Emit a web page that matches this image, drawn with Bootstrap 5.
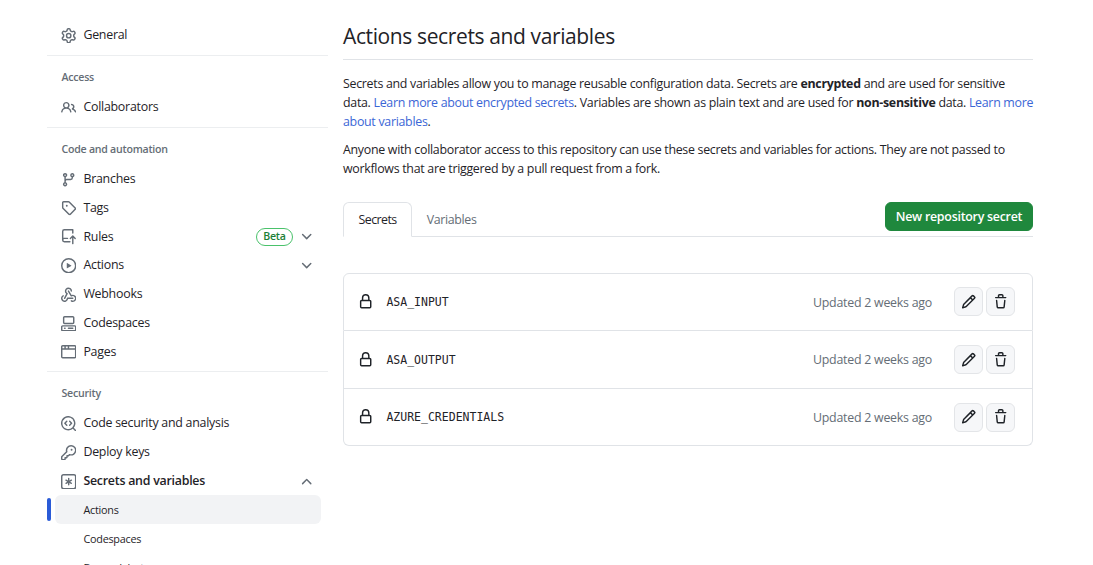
<!DOCTYPE html>
<html lang="en">
<head>
    <meta charset="UTF-8">
    <meta name="viewport" content="width=device-width, initial-scale=1.0">
    <title>Actions secrets and variables</title>
    <link href="https://cdn.jsdelivr.net/npm/bootstrap@5.3.0/dist/css/bootstrap.min.css" rel="stylesheet">
    <style>
        html, body { height: 565px; overflow: hidden; }
        body {
            font-family: "Open Sans", "Liberation Sans", sans-serif;
            font-size: 12.4px;
            letter-spacing: -0.25px;
            color: #1f2328;
            background: #fff;
        }
        .page-wrap { padding-left: 47px; width: 1033px; }
        .side-col { width: 281px; flex: none; padding-top: 20.5px; }
        .main-col { width: 690px; flex: none; margin-left: 15px; padding-top: 21px; }

        .side-item {
            height: 28.8px;
            padding-top: 0.6px;
            padding-left: 6px;
            padding-right: 7px;
            margin-right: 7px;
            margin-left: 8px;
            color: #1f2328;
            text-decoration: none;
            border-radius: 6px;
            gap: 7px;
        }
        .side-item svg.lead-ico { width: 15.4px; height: 15.4px; fill: #656d76; flex: none; }
        .side-item svg.chev { width: 15.4px; height: 15.4px; fill: #656d76; flex: none; }
        .side-sub { font-size: 10.8px; padding-left: 28.5px; }
        .side-sub.is-current { background: #f2f3f5; }
        .cur-bar {
            position: absolute;
            left: -8px;
            top: 3px;
            width: 4px;
            height: 22.5px;
            background: #2a5bd7;
            border-radius: 4px;
        }
        .side-head {
            font-size: 10.6px;
            font-weight: 600;
            color: #656d76;
            padding: 13.9px 0 7.9px 14.5px;
            line-height: 15px;
        }
        .side-rule { border-top: 1px solid #eceef0; margin-top: 5px; }
        .side-rule.rule-first { margin-top: 6px; }

        .page-title {
            font-size: 21px;
            letter-spacing: -0.38px;
            font-weight: 400;
            line-height: 30px;
            padding-bottom: 8px;
            margin-bottom: 13.5px;
            border-bottom: 1px solid #e0e3e7;
        }
        .intro { line-height: 19.2px; margin-bottom: 9px; margin-right: -3px; letter-spacing: -0.29px; }
        .intro a { color: #3b66d6; text-decoration: none; }
        .intro b { font-weight: 700; }

        .tab-row { margin-top: 23px; border-bottom: 1px solid #e0e3e7; height: 35.5px; }
        .tab-link {
            color: #656d76;
            text-decoration: none;
            height: 35.5px;
            padding: 2px 14.5px 0;
            margin-bottom: -1px;
            letter-spacing: -0.35px;
        }
        .tab-link.is-on {
            color: #1f2328;
            background: #fff;
            border: 1px solid #e0e3e7;
            border-bottom-color: #fff;
            border-radius: 6px 6px 0 0;
            letter-spacing: -0.55px;
        }
        .btn-new {
            --bs-btn-bg: #1f883d;
            --bs-btn-border-color: #1f883d;
            --bs-btn-color: #fff;
            --bs-btn-hover-bg: #1f883d;
            --bs-btn-hover-color: #fff;
            font-size: 12.4px;
            font-weight: 600;
            letter-spacing: -0.25px;
            width: 148px;
            height: 29px;
            padding: 1px 0 0;
            margin-bottom: 5px;
            border-radius: 6px;
        }
        .secret-box {
            margin-top: 36px;
            --bs-list-group-border-color: #e0e3e7;
            --bs-list-group-border-radius: 6px;
            --bs-list-group-color: #1f2328;
            --bs-list-group-item-padding-x: 14px;
            --bs-list-group-item-padding-y: 0;
        }
        .secret-box .list-group-item { height: 57.8px; padding-right: 17px; }
        .lock-ico { width: 15.4px; height: 15.4px; fill: #1f2328; flex: none; margin-right: 13px; }
        .secret-name { font-family: "DejaVu Sans Mono", "Liberation Mono", monospace; font-size: 11.5px; letter-spacing: 0; padding-top: 2px; }
        .secret-age { color: #656d76; margin-left: auto; margin-right: 22px; padding-top: 2px; }
        .ico-group { gap: 3px; }
        .ico-btn {
            --bs-btn-padding-x: 0;
            --bs-btn-padding-y: 0;
            --bs-btn-bg: #f6f7f9;
            --bs-btn-border-color: #e3e5e8;
            width: 29px;
            height: 29px;
            border-radius: 6px;
        }
        .ico-btn svg { width: 15.4px; height: 15.4px; fill: #1f2328; }
        .beta-tag {
            font-size: 10.6px;
            font-weight: 600;
            color: #1a7f37;
            border: 1px solid #4ac26b;
            border-radius: 10px;
            line-height: 15.5px;
            padding: 0 6px;
            margin-left: auto;
            margin-right: -1px;
        }
        .mr-end { margin-left: auto; }
    </style>
</head>
<body>
    <svg width="0" height="0" class="d-block position-absolute">
        <defs>
            <symbol id="i-gear" viewBox="0 0 16 16"><path d="M8 0a8.2 8.2 0 0 1 .701.031C9.444.095 9.99.645 10.16 1.29l.288 1.107c.018.066.079.158.212.224.231.114.454.243.668.386.123.082.233.09.299.071l1.103-.303c.644-.176 1.392.021 1.82.63.27.385.506.792.704 1.218.315.675.111 1.422-.364 1.891l-.814.806c-.049.048-.098.147-.088.294.016.257.016.515 0 .772-.01.147.038.246.088.294l.814.806c.475.469.679 1.216.364 1.891a7.977 7.977 0 0 1-.704 1.217c-.428.61-1.176.807-1.82.63l-1.102-.302c-.067-.019-.177-.011-.3.071a5.909 5.909 0 0 1-.668.386c-.133.066-.194.158-.211.224l-.29 1.106c-.168.646-.715 1.196-1.458 1.26a8.006 8.006 0 0 1-1.402 0c-.743-.064-1.289-.614-1.458-1.26l-.289-1.106c-.018-.066-.079-.158-.212-.224a5.738 5.738 0 0 1-.668-.386c-.123-.082-.233-.09-.299-.071l-1.103.303c-.644.176-1.392-.021-1.82-.63a8.12 8.12 0 0 1-.704-1.218c-.315-.675-.111-1.422.363-1.891l.815-.806c.05-.048.098-.147.088-.294a6.214 6.214 0 0 1 0-.772c.01-.147-.038-.246-.088-.294l-.815-.806C.635 6.045.431 5.298.746 4.623a7.92 7.92 0 0 1 .704-1.217c.428-.61 1.176-.807 1.82-.63l1.102.302c.067.019.177.011.3-.071.214-.143.437-.272.668-.386.133-.066.194-.158.211-.224l.29-1.106C6.009.645 6.556.095 7.299.03 7.53.01 7.764 0 8 0Zm-.571 1.525c-.036.003-.108.036-.137.146l-.289 1.105c-.147.561-.549.967-.998 1.189-.173.086-.34.183-.5.29-.417.278-.97.423-1.529.27l-1.103-.303c-.109-.03-.175.016-.195.045-.22.312-.412.644-.573.99-.014.031-.021.11.059.19l.815.806c.411.406.562.957.53 1.456a4.709 4.709 0 0 0 0 .582c.032.499-.119 1.05-.53 1.456l-.815.806c-.081.08-.073.159-.059.19.162.346.353.677.573.989.02.03.085.076.195.046l1.102-.303c.56-.153 1.113-.008 1.53.27.161.107.328.204.501.29.447.222.85.629.997 1.189l.289 1.105c.029.109.101.143.137.146a6.6 6.6 0 0 0 1.142 0c.036-.003.108-.036.137-.146l.289-1.105c.147-.561.549-.967.998-1.189.173-.086.34-.183.5-.29.417-.278.97-.423 1.529-.27l1.103.303c.109.029.175-.016.195-.045.22-.313.411-.644.573-.99.014-.031.021-.11-.059-.19l-.815-.806c-.411-.406-.562-.957-.53-1.456a4.709 4.709 0 0 0 0-.582c-.032-.499.119-1.05.53-1.456l.815-.806c.081-.08.073-.159.059-.19a6.464 6.464 0 0 0-.573-.989c-.02-.03-.085-.076-.195-.046l-1.102.303c-.56.153-1.113.008-1.53-.27a4.44 4.44 0 0 0-.501-.29c-.447-.222-.85-.629-.997-1.189l-.289-1.105c-.029-.11-.101-.143-.137-.146a6.6 6.6 0 0 0-1.142 0ZM11 8a3 3 0 1 1-6 0 3 3 0 0 1 6 0ZM9.5 8a1.5 1.5 0 1 0-3.001.001A1.5 1.5 0 0 0 9.5 8Z"/></symbol>
            <symbol id="i-people" viewBox="0 0 16 16"><path d="M2 5.5a3.5 3.5 0 1 1 5.898 2.549 5.508 5.508 0 0 1 3.034 4.084.75.75 0 1 1-1.482.235 4 4 0 0 0-7.9 0 .75.75 0 0 1-1.482-.236A5.507 5.507 0 0 1 3.102 8.05 3.493 3.493 0 0 1 2 5.5ZM11 4a3.001 3.001 0 0 1 2.22 5.018 5.01 5.01 0 0 1 2.56 3.012.749.749 0 0 1-.885.954.752.752 0 0 1-.549-.514 3.507 3.507 0 0 0-2.522-2.372.75.75 0 0 1-.574-.73v-.352a.75.75 0 0 1 .416-.672A1.5 1.5 0 0 0 11 5.5.75.75 0 0 1 11 4Zm-5.5-.5a2 2 0 1 0-.001 3.999A2 2 0 0 0 5.5 3.5Z"/></symbol>
            <symbol id="i-branch" viewBox="0 0 16 16"><path d="M9.5 3.25a2.25 2.25 0 1 1 3 2.122V6A2.5 2.5 0 0 1 10 8.5H6a1 1 0 0 0-1 1v1.128a2.251 2.251 0 1 1-1.5 0V5.372a2.25 2.25 0 1 1 1.5 0v1.836A2.493 2.493 0 0 1 6 7h4a1 1 0 0 0 1-1v-.628A2.25 2.25 0 0 1 9.5 3.25Zm-6 0a.75.75 0 1 0 1.5 0 .75.75 0 0 0-1.5 0Zm8.25-.75a.75.75 0 1 0 0 1.5.75.75 0 0 0 0-1.5ZM4.25 12a.75.75 0 1 0 0 1.5.75.75 0 0 0 0-1.5Z"/></symbol>
            <symbol id="i-tag" viewBox="0 0 16 16"><path d="M1 7.775V2.75C1 1.784 1.784 1 2.75 1h5.025c.464 0 .91.184 1.238.513l6.25 6.25a1.75 1.75 0 0 1 0 2.474l-5.026 5.026a1.75 1.75 0 0 1-2.474 0l-6.25-6.25A1.752 1.752 0 0 1 1 7.775Zm1.5 0c0 .066.026.13.073.177l6.25 6.25a.25.25 0 0 0 .354 0l5.025-5.025a.25.25 0 0 0 0-.354l-6.25-6.25a.25.25 0 0 0-.177-.073H2.75a.25.25 0 0 0-.25.25ZM6 5a1 1 0 1 1 0 2 1 1 0 0 1 0-2Z"/></symbol>
            <symbol id="i-push" viewBox="0 0 16 16"><path d="M1 2.5A2.5 2.5 0 0 1 3.5 0h8.75a.75.75 0 0 1 .75.75v3.5a.75.75 0 0 1-1.5 0V1.5h-8a1 1 0 0 0-1 1v6.708A2.493 2.493 0 0 1 3.5 9h3.25a.75.75 0 0 1 0 1.5H3.5a1 1 0 0 0 0 2h5.75a.75.75 0 0 1 0 1.5H3.5A2.5 2.5 0 0 1 1 11.5Zm13.23 7.79h-.001l-1.224-1.224v6.184a.75.75 0 0 1-1.5 0V9.066L10.28 10.29a.75.75 0 0 1-1.06-1.061l2.505-2.504a.75.75 0 0 1 1.06 0L15.29 9.23a.751.751 0 0 1-.018 1.042.751.751 0 0 1-1.042.018Z"/></symbol>
            <symbol id="i-play" viewBox="0 0 16 16"><path d="M8 0a8 8 0 1 1 0 16A8 8 0 0 1 8 0ZM1.5 8a6.5 6.5 0 1 0 13 0 6.5 6.5 0 0 0-13 0Zm4.879-2.773 4.264 2.559a.25.25 0 0 1 0 .428l-4.264 2.559A.25.25 0 0 1 6 10.559V5.442a.25.25 0 0 1 .379-.215Z"/></symbol>
            <symbol id="i-webhook" viewBox="0 0 16 16"><path d="M5.5 4.25a2.25 2.25 0 0 1 4.5 0 .75.75 0 0 0 1.5 0 3.75 3.75 0 1 0-6.14 2.889l-2.272 4.258a.75.75 0 0 0 1.324.706L7 7.25a.75.75 0 0 0-.309-1.015A2.25 2.25 0 0 1 5.5 4.25Z"/><path d="M7.364 3.607a.75.75 0 0 1 1.03.257l2.608 4.349a3.75 3.75 0 1 1-.628 6.785.75.75 0 0 1 .752-1.299 2.25 2.25 0 1 0-.033-3.88.75.75 0 0 1-1.03-.256L7.107 4.636a.75.75 0 0 1 .257-1.03Z"/><path d="M2.9 8.776A.75.75 0 0 1 2.625 9.8 2.25 2.25 0 1 0 6 11.75a.75.75 0 0 1 .75-.751h5.5a.75.75 0 0 1 0 1.5H7.425a3.751 3.751 0 1 1-5.55-3.998.75.75 0 0 1 1.024.274Z"/></symbol>
            <symbol id="i-codespaces" viewBox="0 0 16 16"><path d="M0 11.25c0-.966.784-1.75 1.75-1.75h12.5c.966 0 1.75.784 1.75 1.75v3A1.75 1.75 0 0 1 14.25 16H1.75A1.75 1.75 0 0 1 0 14.25Zm2-9.5C2 .784 2.784 0 3.75 0h8.5C13.216 0 14 .784 14 1.75v5a1.75 1.75 0 0 1-1.75 1.75h-8.5A1.75 1.75 0 0 1 2 6.75Zm1.75-.25a.25.25 0 0 0-.25.25v5c0 .138.112.25.25.25h8.5a.25.25 0 0 0 .25-.25v-5a.25.25 0 0 0-.25-.25Zm-2 9.5a.25.25 0 0 0-.25.25v3c0 .138.112.25.25.25h12.5a.25.25 0 0 0 .25-.25v-3a.25.25 0 0 0-.25-.25Z"/><path d="M7 12.75a.75.75 0 0 1 .75-.75h4.5a.75.75 0 0 1 0 1.5h-4.5a.75.75 0 0 1-.75-.75Zm-4 0a.75.75 0 0 1 .75-.75h.5a.75.75 0 0 1 0 1.5h-.5a.75.75 0 0 1-.75-.75Z"/></symbol>
            <symbol id="i-browser" viewBox="0 0 16 16"><path d="M0 2.75C0 1.784.784 1 1.75 1h12.5c.966 0 1.75.784 1.75 1.75v10.5A1.75 1.75 0 0 1 14.25 15H1.75A1.75 1.75 0 0 1 0 13.25ZM14.5 6h-13v7.25c0 .138.112.25.25.25h12.5a.25.25 0 0 0 .25-.25Zm-6-3.5v2h6V2.75a.25.25 0 0 0-.25-.25ZM5 2.5v2h2v-2Zm-3.25 0a.25.25 0 0 0-.25.25V4.5h2v-2Z"/></symbol>
            <symbol id="i-scan" viewBox="0 0 16 16"><path d="M8.47 4.97a.75.75 0 0 0 0 1.06L9.94 7.5 8.47 8.97a.75.75 0 1 0 1.06 1.06l2-2a.75.75 0 0 0 0-1.06l-2-2a.75.75 0 0 0-1.06 0ZM6.53 6.03a.75.75 0 0 0-1.06-1.06l-2 2a.75.75 0 0 0 0 1.06l2 2a.75.75 0 1 0 1.06-1.06L5.06 7.5l1.47-1.47Z"/><path d="M12.246 13.307a7.501 7.501 0 1 1 1.06-1.06l2.474 2.473a.749.749 0 0 1-.326 1.275.749.749 0 0 1-.734-.215ZM1.5 7.5a6.002 6.002 0 0 0 3.608 5.504 6.002 6.002 0 0 0 6.486-1.117.748.748 0 0 1 .292-.293A6 6 0 1 0 1.5 7.5Z"/></symbol>
            <symbol id="i-key" viewBox="0 0 16 16"><path d="M10.5 0a5.499 5.499 0 1 1-1.288 10.848l-.932.932a.749.749 0 0 1-.53.22H7v.75a.749.749 0 0 1-.22.53l-.5.5a.749.749 0 0 1-.53.22H5v.75a.749.749 0 0 1-.22.53l-.5.5a.749.749 0 0 1-.53.22h-2A1.75 1.75 0 0 1 0 14.25v-2c0-.199.079-.389.22-.53l4.932-4.932A5.5 5.5 0 0 1 10.5 0Zm-4 5.5c-.001.431.069.86.205 1.269a.75.75 0 0 1-.181.768L1.5 12.56v1.69c0 .138.112.25.25.25h1.69l.06-.06v-1.19a.75.75 0 0 1 .75-.75h1.19l.06-.06v-1.19a.75.75 0 0 1 .75-.75h1.19l1.023-1.025a.75.75 0 0 1 .768-.18A4 4 0 1 0 6.5 5.5ZM11 6a1 1 0 1 1 0-2 1 1 0 0 1 0 2Z"/></symbol>
            <symbol id="i-asterisk" viewBox="0 0 16 16"><path d="M0 2.75A2.75 2.75 0 0 1 2.75 0h10.5A2.75 2.75 0 0 1 16 2.75v10.5A2.75 2.75 0 0 1 13.25 16H2.75A2.75 2.75 0 0 1 0 13.25ZM2.75 1.5c-.69 0-1.25.56-1.25 1.25v10.5c0 .69.56 1.25 1.25 1.25h10.5c.69 0 1.25-.56 1.25-1.25V2.75c0-.69-.56-1.25-1.25-1.25Z"/><path d="M8 4a.75.75 0 0 1 .75.75V6.7l1.69-.975a.75.75 0 0 1 .75 1.3L9.5 8l1.69.976a.75.75 0 0 1-.75 1.298L8.75 9.3v1.951a.75.75 0 0 1-1.5 0V9.299l-1.69.976a.75.75 0 0 1-.75-1.3L6.5 8l-1.69-.975a.75.75 0 0 1 .75-1.3l1.69.976V4.75A.75.75 0 0 1 8 4Z"/></symbol>
            <symbol id="i-lock" viewBox="0 0 16 16"><path d="M4 4a4 4 0 0 1 8 0v2h.25c.966 0 1.75.784 1.75 1.75v5.5A1.75 1.75 0 0 1 12.25 15h-8.5A1.75 1.75 0 0 1 2 13.25v-5.5C2 6.784 2.784 6 3.75 6H4Zm8.25 3.5h-8.5a.25.25 0 0 0-.25.25v5.5c0 .138.112.25.25.25h8.5a.25.25 0 0 0 .25-.25v-5.5a.25.25 0 0 0-.25-.25ZM10.5 6V4a2.5 2.5 0 1 0-5 0v2Z"/></symbol>
            <symbol id="i-pencil" viewBox="0 0 16 16"><path d="M11.013 1.427a1.75 1.75 0 0 1 2.474 0l1.086 1.086a1.75 1.75 0 0 1 0 2.474l-8.61 8.61c-.21.21-.47.364-.756.445l-3.251.93a.75.75 0 0 1-.927-.928l.929-3.25c.081-.286.235-.547.445-.758l8.61-8.61Zm.176 4.823L9.75 4.81l-6.286 6.287a.253.253 0 0 0-.064.108l-.558 1.953 1.953-.558a.253.253 0 0 0 .108-.064Zm1.238-3.763a.25.25 0 0 0-.354 0L10.811 3.75l1.439 1.44 1.263-1.263a.25.25 0 0 0 0-.354Z"/></symbol>
            <symbol id="i-trash" viewBox="0 0 16 16"><path d="M11 1.75V3h2.25a.75.75 0 0 1 0 1.5H2.75a.75.75 0 0 1 0-1.5H5V1.75C5 .784 5.784 0 6.75 0h2.5C10.216 0 11 .784 11 1.75ZM4.496 6.675l.66 6.6a.25.25 0 0 0 .249.225h5.19a.25.25 0 0 0 .249-.225l.66-6.6a.75.75 0 0 1 1.492.149l-.66 6.6A1.748 1.748 0 0 1 10.595 15h-5.19a1.75 1.75 0 0 1-1.741-1.575l-.66-6.6a.75.75 0 1 1 1.492-.15ZM6.5 1.75V3h3V1.75a.25.25 0 0 0-.25-.25h-2.5a.25.25 0 0 0-.25.25Z"/></symbol>
            <symbol id="i-down" viewBox="0 0 16 16"><path d="M12.78 5.22a.749.749 0 0 1 0 1.06l-4.25 4.25a.749.749 0 0 1-1.06 0L3.22 6.28a.749.749 0 1 1 1.06-1.06L8 8.939l3.72-3.719a.749.749 0 0 1 1.06 0Z"/></symbol>
            <symbol id="i-up" viewBox="0 0 16 16"><path d="M3.22 10.53a.749.749 0 0 1 0-1.06l4.25-4.25a.749.749 0 0 1 1.06 0l4.25 4.25a.749.749 0 1 1-1.06 1.06L8 6.811 4.28 10.53a.749.749 0 0 1-1.06 0Z"/></symbol>
        </defs>
    </svg>

    <div class="page-wrap d-flex">
        <nav class="side-col">
            <a class="side-item d-flex align-items-center" href="#"><svg class="lead-ico"><use href="#i-gear"/></svg>General</a>
            <div class="side-rule rule-first"></div>

            <div class="side-head">Access</div>
            <a class="side-item d-flex align-items-center" href="#"><svg class="lead-ico"><use href="#i-people"/></svg>Collaborators</a>
            <div class="side-rule"></div>

            <div class="side-head">Code and automation</div>
            <a class="side-item d-flex align-items-center" href="#"><svg class="lead-ico"><use href="#i-branch"/></svg>Branches</a>
            <a class="side-item d-flex align-items-center" href="#"><svg class="lead-ico"><use href="#i-tag"/></svg>Tags</a>
            <a class="side-item d-flex align-items-center" href="#"><svg class="lead-ico"><use href="#i-push"/></svg>Rules<span class="beta-tag">Beta</span><svg class="chev"><use href="#i-down"/></svg></a>
            <a class="side-item d-flex align-items-center" href="#"><svg class="lead-ico"><use href="#i-play"/></svg>Actions<svg class="chev mr-end"><use href="#i-down"/></svg></a>
            <a class="side-item d-flex align-items-center" href="#"><svg class="lead-ico"><use href="#i-webhook"/></svg>Webhooks</a>
            <a class="side-item d-flex align-items-center" href="#"><svg class="lead-ico"><use href="#i-codespaces"/></svg>Codespaces</a>
            <a class="side-item d-flex align-items-center" href="#"><svg class="lead-ico"><use href="#i-browser"/></svg>Pages</a>
            <div class="side-rule"></div>

            <div class="side-head">Security</div>
            <a class="side-item d-flex align-items-center" href="#"><svg class="lead-ico"><use href="#i-scan"/></svg>Code security and analysis</a>
            <a class="side-item d-flex align-items-center" href="#"><svg class="lead-ico"><use href="#i-key"/></svg>Deploy keys</a>
            <a class="side-item d-flex align-items-center fw-semibold" href="#"><svg class="lead-ico"><use href="#i-asterisk"/></svg>Secrets and variables<svg class="chev mr-end"><use href="#i-up"/></svg></a>
            <a class="side-item side-sub is-current d-flex align-items-center position-relative" href="#"><span class="cur-bar"></span>Actions</a>
            <a class="side-item side-sub d-flex align-items-center" href="#">Codespaces</a>
            <a class="side-item side-sub d-flex align-items-center" href="#">Dependabot</a>
        </nav>

        <main class="main-col">
            <h2 class="page-title">Actions secrets and variables</h2>
            <p class="intro">Secrets and variables allow you to manage reusable configuration data. Secrets are <b>encrypted</b> and are used for sensitive<br>data. <a href="#">Learn more about encrypted secrets</a>. Variables are shown as plain text and are used for <b>non-sensitive</b> data. <a href="#">Learn more about variables</a>.</p>
            <p class="intro">Anyone with collaborator access to this repository can use these secrets and variables for actions. They are not passed to workflows that are triggered by a pull request from a fork.</p>

            <div class="tab-row d-flex align-items-end">
                <a class="tab-link is-on d-flex align-items-center" href="#">Secrets</a>
                <a class="tab-link d-flex align-items-center" href="#">Variables</a>
                <button class="btn btn-new ms-auto" type="button">New repository secret</button>
            </div>

            <ul class="list-group secret-box">
                <li class="list-group-item d-flex align-items-center">
                    <svg class="lock-ico"><use href="#i-lock"/></svg>
                    <span class="secret-name">ASA_INPUT</span>
                    <span class="secret-age">Updated 2 weeks ago</span>
                    <div class="d-flex ico-group">
                        <button class="btn ico-btn d-flex align-items-center justify-content-center" type="button"><svg><use href="#i-pencil"/></svg></button>
                        <button class="btn ico-btn d-flex align-items-center justify-content-center" type="button"><svg><use href="#i-trash"/></svg></button>
                    </div>
                </li>
                <li class="list-group-item d-flex align-items-center">
                    <svg class="lock-ico"><use href="#i-lock"/></svg>
                    <span class="secret-name">ASA_OUTPUT</span>
                    <span class="secret-age">Updated 2 weeks ago</span>
                    <div class="d-flex ico-group">
                        <button class="btn ico-btn d-flex align-items-center justify-content-center" type="button"><svg><use href="#i-pencil"/></svg></button>
                        <button class="btn ico-btn d-flex align-items-center justify-content-center" type="button"><svg><use href="#i-trash"/></svg></button>
                    </div>
                </li>
                <li class="list-group-item d-flex align-items-center">
                    <svg class="lock-ico"><use href="#i-lock"/></svg>
                    <span class="secret-name">AZURE_CREDENTIALS</span>
                    <span class="secret-age">Updated 2 weeks ago</span>
                    <div class="d-flex ico-group">
                        <button class="btn ico-btn d-flex align-items-center justify-content-center" type="button"><svg><use href="#i-pencil"/></svg></button>
                        <button class="btn ico-btn d-flex align-items-center justify-content-center" type="button"><svg><use href="#i-trash"/></svg></button>
                    </div>
                </li>
            </ul>
        </main>
    </div>

    <script src="https://cdn.jsdelivr.net/npm/bootstrap@5.3.0/dist/js/bootstrap.bundle.min.js"></script>
</body>
</html>
